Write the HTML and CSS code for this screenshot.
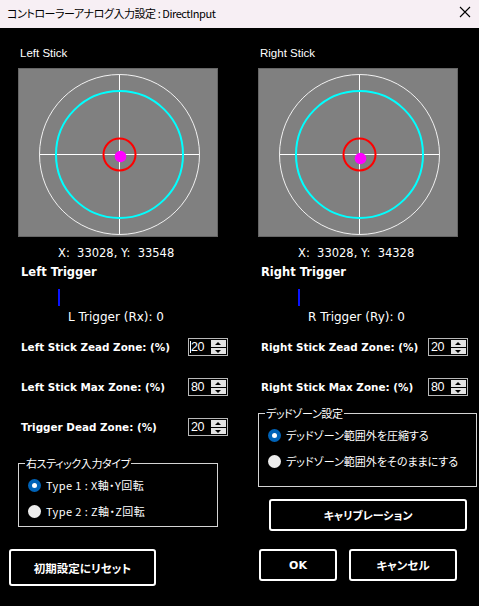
FILE: index.html
```html
<!DOCTYPE html>
<html lang="ja">
<head>
<meta charset="utf-8">
<title>コントローラーアナログ入力設定</title>
<link rel="stylesheet" href="styles.css">
</head>
<body>
<div class="titlebar">
  <span class="title">コントローラーアナログ入力設定 : DirectInput</span>
  <svg class="close" width="12" height="12" viewBox="0 0 12 12"><path d="M1 1L11 11M11 1L1 11" stroke="#000" stroke-width="1.1" fill="none"/></svg>
</div>
<div class="main">
  <div class="col col-left">
    <div class="stick-label">Left Stick</div>
    <svg class="stick" width="200" height="169" viewBox="0 0 200 169">
      <rect x="0.5" y="0.5" width="199" height="168" fill="#808080" stroke="#666"/>
      <circle cx="101.5" cy="86.5" r="80" fill="none" stroke="#f2f2f2" stroke-width="1"/>
      <path d="M21.5 86.5H181.5M101.5 6.5V166.5" stroke="#fff" stroke-width="1"/>
      <circle cx="101.5" cy="86.5" r="63.5" fill="none" stroke="#00ffff" stroke-width="2"/>
      <circle cx="101.5" cy="86.5" r="16" fill="none" stroke="#ff0000" stroke-width="2"/>
      <circle cx="102.5" cy="88.5" r="5.8" fill="#ff00ff"/>
    </svg>
    <div class="xy">X:  33028, Y:  33548</div>
    <div class="trig-title">Left Trigger</div>
    <div class="trig-bar"></div>
    <div class="trig-text">L Trigger (Rx): 0</div>
    <div class="row row-first">
      <span class="row-label">Left Stick Zead Zone: (%)</span>
      <div class="spin"><span class="spin-val caret">20</span><span class="spin-btns"><span class="spin-up"></span><span class="spin-down"></span></span></div>
    </div>
    <div class="row">
      <span class="row-label">Left Stick Max Zone: (%)</span>
      <div class="spin"><span class="spin-val">80</span><span class="spin-btns"><span class="spin-up"></span><span class="spin-down"></span></span></div>
    </div>
    <div class="row">
      <span class="row-label">Trigger Dead Zone: (%)</span>
      <div class="spin"><span class="spin-val">20</span><span class="spin-btns"><span class="spin-up"></span><span class="spin-down"></span></span></div>
    </div>
    <fieldset class="group group-left">
      <legend>右スティック入力タイプ</legend>
      <div class="group-body">
        <div class="radio-row"><span class="radio on"></span><span class="radio-text type-text">Type 1 : X軸・Y回転</span></div>
        <div class="radio-row"><span class="radio"></span><span class="radio-text type-text">Type 2 : Z軸・Z回転</span></div>
      </div>
    </fieldset>
    <div class="btn btn-reset">初期設定にリセット</div>
  </div>
  <div class="col col-right">
    <div class="stick-label">Right Stick</div>
    <svg class="stick" width="200" height="169" viewBox="0 0 200 169">
      <rect x="0.5" y="0.5" width="199" height="168" fill="#808080" stroke="#666"/>
      <circle cx="101.5" cy="86.5" r="80" fill="none" stroke="#f2f2f2" stroke-width="1"/>
      <path d="M21.5 86.5H181.5M101.5 6.5V166.5" stroke="#fff" stroke-width="1"/>
      <circle cx="101.5" cy="86.5" r="63.5" fill="none" stroke="#00ffff" stroke-width="2"/>
      <circle cx="101.5" cy="86.5" r="16" fill="none" stroke="#ff0000" stroke-width="2"/>
      <circle cx="102.5" cy="90.5" r="5.8" fill="#ff00ff"/>
    </svg>
    <div class="xy">X:  33028, Y:  34328</div>
    <div class="trig-title">Right Trigger</div>
    <div class="trig-bar"></div>
    <div class="trig-text">R Trigger (Ry): 0</div>
    <div class="row row-first">
      <span class="row-label">Right Stick Zead Zone: (%)</span>
      <div class="spin"><span class="spin-val">20</span><span class="spin-btns"><span class="spin-up"></span><span class="spin-down"></span></span></div>
    </div>
    <div class="row">
      <span class="row-label">Right Stick Max Zone: (%)</span>
      <div class="spin"><span class="spin-val">80</span><span class="spin-btns"><span class="spin-up"></span><span class="spin-down"></span></span></div>
    </div>
    <fieldset class="group group-right">
      <legend>デッドゾーン設定</legend>
      <div class="group-body">
        <div class="radio-row"><span class="radio on"></span><span class="radio-text">デッドゾーン範囲外を圧縮する</span></div>
        <div class="radio-row"><span class="radio"></span><span class="radio-text">デッドゾーン範囲外をそのままにする</span></div>
      </div>
    </fieldset>
    <div class="btn btn-calib">キャリブレーション</div>
    <div class="btn-row">
      <div class="btn btn-ok">OK</div>
      <div class="btn btn-cancel">キャンセル</div>
    </div>
  </div>
</div>
</body>
</html>
```
FILE: styles.css
```css
html, body {
  margin: 0;
  padding: 0;
  background: #000;
}
body {
  width: 479px;
  height: 606px;
  overflow: hidden;
  color: #fff;
  font-family: "DejaVu Sans", "Noto Sans CJK JP", sans-serif;
}
.titlebar {
  height: 28px;
  background: #f7eff4;
  display: flex;
  align-items: center;
  justify-content: space-between;
  padding: 0 8px 0 7px;
  box-sizing: border-box;
}
.title {
  color: #000;
  font-family: "Noto Sans CJK JP", sans-serif;
  font-feature-settings: "palt";
  font-size: 11px;
  letter-spacing: -0.45px;
  line-height: 16px;
  margin-top: -2px;
}
.close {
  display: block;
  margin-top: -4px;
}
.main {
  display: grid;
  grid-template-columns: 212px 219px;
  column-gap: 28px;
  padding: 18px 0 0 18px;
}
.col {
  display: flex;
  flex-direction: column;
  align-items: flex-start;
}
.stick-label {
  font-family: "Liberation Sans", sans-serif;
  font-size: 11.5px;
  line-height: 14px;
  padding-left: 2px;
}
.stick {
  display: block;
  margin-top: 8px;
}
.xy {
  margin-top: 9px;
  margin-left: 40px;
  font-size: 11.5px;
  line-height: 14px;
  white-space: pre;
}
.trig-title {
  margin-top: 4px;
  margin-left: 3px;
  font-weight: bold;
  font-size: 11.5px;
  line-height: 16px;
}
.trig-bar {
  margin-top: 9px;
  margin-left: 40px;
  width: 2px;
  height: 17px;
  background: #0a14ff;
}
.trig-text {
  margin-top: 4px;
  margin-left: 50px;
  font-size: 12px;
  line-height: 15px;
}
.row {
  display: flex;
  align-items: center;
  width: 210px;
  height: 18px;
  margin-top: 22px;
}
.row-first {
  margin-top: 13px;
}
.row-label {
  margin-left: 3px;
  font-weight: bold;
  font-size: 10.4px;
  line-height: 14px;
  width: 167px;
  white-space: nowrap;
}
.spin {
  width: 40px;
  height: 18px;
  box-sizing: border-box;
  border: 1px solid #b9b9b9;
  display: flex;
  align-items: stretch;
}
.spin-val {
  flex: 1;
  font-family: "Liberation Sans", sans-serif;
  font-size: 12.5px;
  line-height: 16px;
  padding-left: 2px;
  letter-spacing: -0.5px;
}
.spin-val.caret {
  padding-left: 1px;
}
.spin-val.caret::before {
  content: "";
  display: inline-block;
  width: 1px;
  height: 12px;
  background: #fff;
  vertical-align: -2px;
}
.spin-btns {
  width: 15px;
  margin: 1px 1px 1px 0;
  display: flex;
  flex-direction: column;
  gap: 1px;
}
.spin-up, .spin-down {
  flex: 1;
  background: #e3e3e3;
  position: relative;
}
.spin-up::after, .spin-down::after {
  content: "";
  position: absolute;
  left: 4px;
  width: 0;
  height: 0;
  border-left: 3.5px solid transparent;
  border-right: 3.5px solid transparent;
}
.spin-up::after {
  top: 2px;
  border-bottom: 3px solid #000;
}
.spin-down::after {
  top: 2px;
  border-top: 3px solid #000;
}
.group {
  margin: 0;
  padding: 0;
  border: 1px solid #d4d4d4;
  box-sizing: border-box;
  min-width: 0;
}
.group legend {
  margin-left: 6px;
  padding: 0 1px;
  font-family: "Noto Sans CJK JP", sans-serif;
  font-feature-settings: "palt";
  font-size: 11px;
  letter-spacing: -0.4px;
  line-height: 14px;
}
.group-body {
  display: flex;
  flex-direction: column;
  gap: 10px;
  padding: 7px 0 0 9px;
}
.group-left {
  margin-top: 20px;
  width: 200px;
  height: 71px;
}
.group-right {
  margin-top: 10px;
  width: 219px;
  height: 81px;
}
.radio-row {
  display: flex;
  align-items: center;
  height: 16px;
}
.radio {
  width: 13px;
  height: 13px;
  border-radius: 50%;
  background: #ececec;
  box-sizing: border-box;
  margin-right: 5px;
  flex: none;
}
.radio.on {
  background: #0063b8;
  display: flex;
  align-items: center;
  justify-content: center;
}
.radio.on::after {
  content: "";
  width: 5px;
  height: 5px;
  border-radius: 50%;
  background: #fff;
}
.radio-text {
  font-family: "Noto Sans CJK JP", sans-serif;
  font-feature-settings: "palt";
  font-size: 11px;
  line-height: 16px;
  white-space: nowrap;
}
.type-text {
  letter-spacing: 0.4px;
}
.btn {
  box-sizing: border-box;
  border: 2px solid #fff;
  border-radius: 3px;
  display: flex;
  align-items: center;
  justify-content: center;
  font-family: "Noto Sans CJK JP", sans-serif;
  font-feature-settings: "palt";
  font-weight: bold;
  font-size: 11.5px;
}
.btn-reset {
  margin-top: 22px;
  margin-left: -9px;
  width: 147px;
  height: 37px;
}
.btn-calib {
  margin-top: 12px;
  margin-left: 11px;
  width: 198px;
  height: 32px;
  font-size: 11px;
}
.btn-row {
  display: flex;
  gap: 12px;
  margin-top: 18px;
  margin-left: 1px;
}
.btn-ok {
  width: 78px;
  height: 32px;
  font-family: "DejaVu Sans", sans-serif;
  font-size: 11px;
}
.btn-cancel {
  width: 108px;
  height: 32px;
}
```
